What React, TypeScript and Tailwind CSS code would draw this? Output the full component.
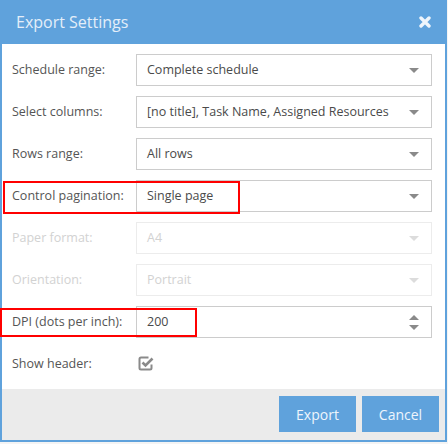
import React from "react";

const Caret = ({ light }: { light?: boolean }) => (
  <svg width="10" height="5" viewBox="0 0 10 5" className="shrink-0">
    <path d="M0 0 H10 L5 5 Z" fill={light ? "#dcdcdc" : "#8a8a8a"} />
  </svg>
);

const Row = ({
  label,
  value,
  disabled,
}: {
  label: string;
  value: string;
  disabled?: boolean;
}) => (
  <div className="flex items-center h-[32px]">
    <div
      className={`w-[134px] pl-[10px] text-[12.5px] ${disabled ? "text-[#d2d2d2]" : "text-[#555]"}`}
    >
      {label}
    </div>
    <div
      className={`w-[296px] h-[32px] border ${disabled ? "border-[#ececec] text-[#d2d2d2]" : "border-[#cccccc] text-[#4a4a4a]"} flex items-center justify-between pl-[10px] pr-[12px] text-[12.5px]`}
    >
      <span className="whitespace-nowrap">{value}</span>
      <Caret light={disabled} />
    </div>
  </div>
);

export default function App() {
  return (
    <div className="relative w-[448px] h-[444px] bg-[#f4f4f4] font-['Open_Sans',sans-serif]">
      <div className="w-[447px] h-[442px] border-2 border-[#5fa2dc] bg-white flex flex-col">
        <div className="bg-[#5fa2dc] -mt-[2px] -mx-[2px] h-[44px] flex items-center justify-between pl-[16px] pr-[16px]">
          <span className="text-[16px] text-[#e4eef9] leading-none -mt-[1px]">Export Settings</span>
          <svg width="12" height="12" viewBox="0 0 12 12">
            <path
              d="M2 2 L10 10 M10 2 L2 10"
              stroke="#eef5fc"
              strokeWidth="3.4"
              strokeLinecap="round"
            />
          </svg>
        </div>
        <div className="flex-1 flex flex-col gap-[10px] pt-[10px]">
          <Row label="Schedule range:" value="Complete schedule" />
          <Row label="Select columns:" value="[no title], Task Name, Assigned Resources" />
          <Row label="Rows range:" value="All rows" />
          <Row label="Control pagination:" value="Single page" />
          <Row label="Paper format:" value="A4" disabled />
          <Row label="Orientation:" value="Portrait" disabled />
          <div className="flex items-center h-[32px]">
            <div className="w-[134px] pl-[10px] text-[12.5px] text-[#555]">DPI (dots per inch):</div>
            <div className="w-[296px] h-[32px] border border-[#cccccc] flex items-center justify-between pl-[10px] pr-[12px] text-[12.5px] text-[#4a4a4a]">
              <span>200</span>
              <svg width="10" height="15" viewBox="0 0 10 15">
                <path d="M0 5 L5 0 L10 5 Z" fill="#8a8a8a" />
                <path d="M0 10 H10 L5 15 Z" fill="#8a8a8a" />
              </svg>
            </div>
          </div>
          <div className="flex items-center h-[32px]">
            <div className="w-[134px] pl-[10px] text-[12.5px] text-[#555]">Show header:</div>
            <svg width="16" height="15" viewBox="0 0 16 15" className="ml-[2px] -mt-[2px]">
              <path
                d="M10.5 1.5 H3 Q1.5 1.5 1.5 3 V12 Q1.5 13.5 3 13.5 H12 Q13.5 13.5 13.5 12 V8.5"
                fill="none"
                stroke="#8a8a8a"
                strokeWidth="2"
              />
              <path
                d="M4.5 6.5 L7.5 9.5 L14.5 2.5"
                fill="none"
                stroke="#8a8a8a"
                strokeWidth="2.6"
              />
            </svg>
          </div>
        </div>
        <div className="h-[51px] bg-[#ebebeb] flex justify-end items-start pt-[7px] pr-[6px] gap-[6px]">
          <button className="w-[77px] h-[36px] bg-[#5fa2dc] text-[#eef5fc] text-[14px]">Export</button>
          <button className="w-[77px] h-[36px] bg-[#5fa2dc] text-[#eef5fc] text-[14px]">Cancel</button>
        </div>
      </div>
      <div className="absolute left-[3px] top-[181px] w-[237px] h-[33px] border-2 border-[#ff0000]" />
      <div className="absolute left-0 top-[308px] w-[197px] h-[29px] border-2 border-[#ff0000]" />
    </div>
  );
}
